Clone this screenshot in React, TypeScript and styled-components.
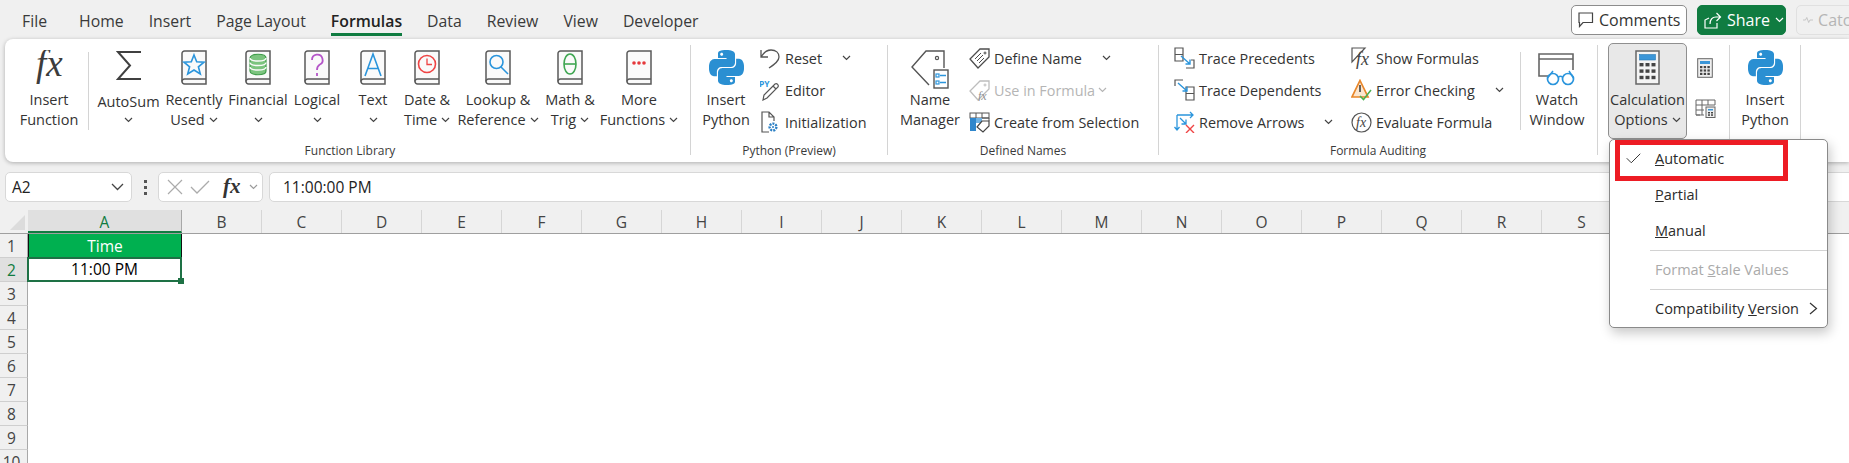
import React from 'react';
import styled, { createGlobalStyle } from 'styled-components';
import { SiPython } from 'react-icons/si';

const GlobalStyle = createGlobalStyle`
    * { box-sizing: border-box; }
    html, body {
        margin: 0;
        height: 463px;
        overflow: hidden;
        background: #fff;
        font-family: "Open Sans", "Noto Sans", sans-serif;
        color: #333;
    }
`;

const Page = styled.div`
    position: relative;
    width: 1849px;
    height: 463px;
    overflow: hidden;
    background: #fff;
`;

const Chrome = styled.div`
    background: #f0f0f0;
    height: 210px;
    display: flex;
    flex-direction: column;
`;

const TabBar = styled.div`
    display: flex;
    justify-content: space-between;
    height: 39px;
    flex-shrink: 0;
`;

const Tabs = styled.div`
    display: flex;
    gap: 25px;
    padding-left: 22px;
`;

const Tab = styled.div<{ $active?: boolean; $extra?: number }>`
    height: 36px;
    padding-top: 11px;
    line-height: 20px;
    font-size: 15.8px;
    white-space: nowrap;
    font-weight: ${p => (p.$active ? 600 : 400)};
    margin-right: ${p => p.$extra || 0}px;
    color: ${p => (p.$active ? '#222' : '#3a3a3a')};
    border-bottom: 3px solid ${p => (p.$active ? '#107c41' : 'transparent')};
`;

const Actions = styled.div`
    width: 278px;
    padding-top: 5px;
    display: flex;
    overflow: hidden;
`;

const ActionButton = styled.div<{ $w: number; $kind: 'plain' | 'share' | 'faded' }>`
    width: ${p => p.$w}px;
    height: 30px;
    flex-shrink: 0;
    display: flex;
    align-items: center;
    border-radius: 5px;
    font-size: 16px;
    white-space: nowrap;
    margin-right: 10px;
    border: 1px solid ${p => (p.$kind === 'plain' ? '#8c8c8c' : p.$kind === 'share' ? '#107c41' : '#e0e0e0')};
    background: ${p => (p.$kind === 'plain' ? '#fff' : p.$kind === 'share' ? '#107c41' : '#f0f0f0')};
    color: ${p => (p.$kind === 'plain' ? '#333' : p.$kind === 'share' ? '#fff' : '#b5b5b5')};
    padding-left: 6px;
    gap: 5px;
`;

const Ribbon = styled.div`
    margin-left: 5px;
    height: 123px;
    flex-shrink: 0;
    background: #fff;
    border-radius: 8px 0 0 8px;
    box-shadow: 0 1px 4px rgba(0, 0, 0, 0.28);
    padding: 6px 0 0 5px;
    display: flex;
    position: relative;
`;

const Group = styled.div<{ $w: number }>`
    width: ${p => p.$w}px;
    height: 110px;
    border-right: 1px solid #d4d4d4;
    display: flex;
    flex-direction: column;
    flex-shrink: 0;
`;

const GroupBody = styled.div<{ $pad?: number }>`
    height: 98px;
    flex-shrink: 0;
    display: flex;
    padding-left: ${p => p.$pad || 0}px;
`;

const GroupLabel = styled.div`
    height: 16px;
    flex-shrink: 0;
    line-height: 16px;
    font-size: 12px;
    text-align: center;
    color: #3a3a3a;
    white-space: nowrap;
`;

const BigButton = styled.div<{ $w: number }>`
    width: ${p => p.$w}px;
    flex-shrink: 0;
    display: flex;
    flex-direction: column;
    align-items: center;
    padding-top: 5px;
`;

const ActiveButton = styled(BigButton)`
    height: 96px;
    margin: -2px 0 0 10px;
    padding-top: 6px;
    background: #e8e8e8;
    border: 1px solid #8f8f8f;
    border-radius: 5px;
`;

const IconSlot = styled.div`
    height: 34px;
    margin-bottom: 6px;
    display: flex;
    justify-content: center;
    align-items: flex-start;
`;

const Line = styled.div<{ $shift?: number }>`
    height: 20px;
    line-height: 20px;
    font-size: 14.5px;
    white-space: nowrap;
    display: flex;
    align-items: center;
    justify-content: center;
    gap: 4px;
    position: relative;
    top: ${p => (p.$shift || 0) - 0.5}px;
`;

const Inner = styled.div`
    width: 1px;
    height: 78px;
    margin-top: 7px;
    background: #d4d4d4;
    flex-shrink: 0;
`;

const Stack = styled.div<{ $w: number }>`
    width: ${p => p.$w}px;
    flex-shrink: 0;
    margin-top: -3px;
    display: flex;
    flex-direction: column;
`;

const Row = styled.div<{ $off?: boolean }>`
    height: 32px;
    display: flex;
    align-items: center;
    white-space: nowrap;
    font-size: 14.4px;
    color: ${p => (p.$off ? '#b5b5b5' : '#333')};
`;

const RowIcon = styled.div`
    width: 25px;
    flex-shrink: 0;
    display: flex;
    align-items: center;
`;

const RowChevron = styled.div<{ $gap: number }>`
    margin-left: ${p => p.$gap}px;
    display: flex;
    align-items: center;
`;

const MiniIcons = styled.div`
    width: 22px;
    margin-left: 7px;
    padding-top: 13px;
    display: flex;
    flex-direction: column;
    align-items: center;
    gap: 21px;
`;

const FormulaBar = styled.div`
    display: flex;
    height: 30px;
    margin-top: 10px;
    padding-left: 5px;
    flex-shrink: 0;
`;

const Field = styled.div<{ $w?: number; $grow?: boolean }>`
    width: ${p => (p.$w ? `${p.$w}px` : 'auto')};
    flex: ${p => (p.$grow ? 1 : 'none')};
    background: #fff;
    border: 1px solid #d8d8d8;
    border-radius: 5px;
    display: flex;
    align-items: center;
    font-size: 15.5px;
    color: #222;
`;

const NameField = styled(Field)`
    justify-content: space-between;
    padding: 0 7px 0 6px;
`;

const FormulaField = styled(Field)`
    margin: 0 -1px 0 6px;
    padding-left: 13px;
    border-radius: 5px 0 0 5px;
`;

const Dots = styled.div`
    width: 26px;
    display: flex;
    flex-direction: column;
    align-items: center;
    justify-content: center;
    gap: 3px;

    i {
        width: 3px;
        height: 3px;
        background: #555;
    }
`;

const FxTools = styled(Field)`
    justify-content: space-between;
    padding: 0 4px 0 8px;
`;

const Sheet = styled.div`
    height: 253px;
    overflow: hidden;
`;

const HeaderRow = styled.div`
    display: flex;
    height: 24px;
    background: #f0f0f0;
    border-bottom: 1px solid #9f9f9f;
`;

const Corner = styled.div`
    width: 28px;
    flex-shrink: 0;
    padding: 5px 0 0 10px;
`;

const Triangle = styled.div`
    width: 0;
    height: 0;
    border-left: 15px solid transparent;
    border-bottom: 15px solid #dcdcdc;
`;

const ColHead = styled.div<{ $w: number; $on?: boolean }>`
    width: ${p => p.$w}px;
    flex-shrink: 0;
    text-align: center;
    font-size: 15.5px;
    line-height: 24px;
    color: ${p => (p.$on ? '#107c41' : '#444')};
    background: ${p => (p.$on ? '#e0e0e0' : 'transparent')};
    border-right: 1px solid ${p => (p.$on ? '#a8a8a8' : '#d6d6d6')};
    border-bottom: ${p => (p.$on ? '2px solid #107c41' : 'none')};
`;

const SheetRow = styled.div`
    display: flex;
    height: 24px;
`;

const RowHead = styled.div<{ $on?: boolean }>`
    width: 28px;
    flex-shrink: 0;
    text-align: center;
    font-size: 15.5px;
    line-height: 24px;
    padding-right: 4px;
    color: ${p => (p.$on ? '#107c41' : '#444')};
    background: ${p => (p.$on ? '#e0e0e0' : '#f0f0f0')};
    border-right: 1px solid #a8a8a8;
    border-bottom: 1px solid #cfcfcf;
`;

const Cell = styled.div`
    width: 154px;
    height: 24px;
    flex-shrink: 0;
    text-align: center;
    font-size: 15.5px;
    line-height: 24px;
`;

const TitleCell = styled(Cell)`
    background: #00b050;
    color: #fff;
    border-left: 1px solid #111;
    border-right: 1px solid #111;
`;

const SelectedCell = styled(Cell)`
    position: relative;
    color: #000;
    line-height: 20px;
    border: 2px solid #1e7145;
    margin: -1px 0 0 -1px;
    width: 155px;
    height: 25px;
    background: #fff;
`;

const FillHandle = styled.div`
    position: absolute;
    right: -4px;
    bottom: -4px;
    width: 6px;
    height: 6px;
    background: #1e7145;
`;

const Menu = styled.div`
    position: absolute;
    left: 1609px;
    top: 139px;
    width: 219px;
    height: 189px;
    background: #fff;
    border: 1px solid #8a8a8a;
    border-radius: 5px;
    box-shadow: 2px 5px 12px rgba(0, 0, 0, 0.22);
    padding-top: 1px;
    font-size: 14.5px;
    color: #2b2b2b;
`;

const MenuItem = styled.div<{ $off?: boolean }>`
    height: 36px;
    display: flex;
    align-items: center;
    padding: 0 0 2px 45px;
    white-space: nowrap;
    position: relative;
    color: ${p => (p.$off ? '#aaaaaa' : '#2b2b2b')};
`;

const MenuCheck = styled.div`
    position: absolute;
    left: 16px;
    top: 12px;
    display: flex;
`;

const MenuArrow = styled.div`
    position: absolute;
    right: 9px;
    top: 11px;
    display: flex;
`;

const MenuLine = styled.div`
    height: 1px;
    margin: 1px 0 1px 40px;
    background: #d2d2d2;
`;

const RedBox = styled.div`
    position: absolute;
    left: 5px;
    top: 0;
    width: 173px;
    height: 41px;
    border: 5px solid #ed1c24;
`;

const serif = '"Liberation Serif", "DejaVu Serif", serif';

const Chevron = ({ color = '#444' }: { color?: string }) => (
    <svg width="9" height="6" viewBox="0 0 9 6"><path d="M1 1 L4.5 4.5 L8 1" fill="none" stroke={color} strokeWidth="1.2" /></svg>
);

const Book = ({ children }: { children: React.ReactNode }) => (
    <svg width="26" height="35" viewBox="0 0 26 35">
        <path d="M3.5 1 H25 V34 H3.5 A2.5 2.5 0 0 1 1 31.5 V3.5 A2.5 2.5 0 0 1 3.5 1 Z" fill="#fafafa" stroke="#5a5a5a" strokeWidth="1.5" />
        <path d="M1 31.5 A2.5 2.5 0 0 1 3.5 29 H25" fill="none" stroke="#5a5a5a" strokeWidth="1.5" />
        {children}
    </svg>
);

const FxBig = () => (
    <svg width="36" height="36" viewBox="0 0 36 36">
        <text x="5" y="26" fontFamily={serif} fontStyle="italic" fontSize="37" fill="#3c3c3c">fx</text>
    </svg>
);

const Sigma = () => (
    <svg width="26" height="31" viewBox="0 0 26 31">
        <path d="M25 2 H2 L14 15.5 L2 29 H25" fill="none" stroke="#404040" strokeWidth="2" />
    </svg>
);

const blue = '#2b95dc';
const line = { fill: 'none', strokeWidth: 1.6 };

const StarIcon = () => (
    <Book><polygon points="13,5 15.7,11.8 23,12.2 17.4,16.8 19.3,24 13,20 6.7,24 8.6,16.8 3,12.2 10.3,11.8" {...line} stroke={blue} /></Book>
);

const CoinsIcon = () => (
    <Book>
        <path d="M5 8 C5 3 21 3 21 8 V21 C21 26 5 26 5 21 Z" fill="#7cc47f" stroke="#3f9c4a" strokeWidth="1.2" />
        <path d="M5 8 C5 12 21 12 21 8 M5 12.5 C5 16.5 21 16.5 21 12.5 M5 17 C5 21 21 21 21 17" fill="none" stroke="#fafafa" strokeWidth="1.4" />
    </Book>
);

const QuestionIcon = () => (
    <Book><path d="M8 10 A5.3 5.3 0 1 1 15.5 14.8 C13.8 16 13 17 13 20 M13 23 V26" {...line} strokeWidth={1.8} stroke="#b455c8" /></Book>
);

const LetterIcon = () => (
    <Book><path d="M5 26 L13 4 L21 26 M8 18.5 H18" {...line} stroke={blue} /></Book>
);

const ClockIcon = () => (
    <Book>
        <circle cx="13" cy="14" r="8.5" {...line} stroke="#ef4444" />
        <path d="M13 8.5 V14.5 H18" {...line} strokeWidth={1.3} stroke="#ef4444" />
    </Book>
);

const LensIcon = () => (
    <Book>
        <circle cx="11.5" cy="12" r="6.5" {...line} stroke={blue} />
        <path d="M16 17 L23 24" {...line} stroke={blue} />
    </Book>
);

const ThetaIcon = () => (
    <Book>
        <ellipse cx="13" cy="14" rx="6" ry="10" {...line} stroke="#3fa652" />
        <path d="M7 14 H19" {...line} stroke="#3fa652" />
    </Book>
);

const MoreIcon = () => (
    <Book>
        <circle cx="8" cy="13" r="1.8" fill="#e5383b" />
        <circle cx="13" cy="13" r="1.8" fill="#e5383b" />
        <circle cx="18" cy="13" r="1.8" fill="#e5383b" />
    </Book>
);

const PyIcon = () => <SiPython size={35} color="#2a8fd2" />;

const Undo = () => (
    <svg width="20" height="21" viewBox="0 0 20 21">
        <path d="M1 2 V9 H8 M1.5 8.5 C4 4 8 2 11 2 C16 2 19 5 19 9 C19 13 15 16 9 20" fill="none" stroke="#555" strokeWidth="1.3" />
    </svg>
);

const PyPencil = () => (
    <svg width="20" height="21" viewBox="0 0 20 21">
        <text x="-1" y="7" fontFamily="Open Sans, sans-serif" fontWeight="700" fontSize="8.5" fill={blue}>PY</text>
        <path d="M3 20 L4 15 L15 4 C17 3 19 5 18 7 L7 18 Z M13 6 L16 9" fill="none" stroke="#555" strokeWidth="1.2" />
    </svg>
);

const DocGear = () => (
    <svg width="20" height="22" viewBox="0 0 20 22">
        <path d="M9 21 H2 V1 H9 L14 6 V10 M9 1 V6 H14" fill="none" stroke="#555" strokeWidth="1.2" />
        <circle cx="13" cy="16" r="3.4" fill="none" stroke="#2b7fc4" strokeWidth="2.4" strokeDasharray="2 1" />
        <circle cx="13" cy="16" r="1" fill="#2b7fc4" />
    </svg>
);

const NameTag = () => (
    <svg width="38" height="40" viewBox="0 0 38 40">
        <path d="M33 18 V1 H15 L1 17 L18 35" fill="none" stroke="#555" strokeWidth="1.4" />
        <circle cx="26" cy="8" r="1.6" fill="none" stroke="#555" strokeWidth="1.2" />
        <rect x="23" y="20" width="14" height="18" fill="#fff" stroke="#555" strokeWidth="1.4" />
        <rect x="25" y="24" width="3" height="3" fill="none" stroke={blue} strokeWidth="1.2" />
        <rect x="25" y="31" width="3" height="3" fill="none" stroke={blue} strokeWidth="1.2" />
        <path d="M29 25.5 H35 M29 32.5 H35" stroke={blue} strokeWidth="1.3" />
    </svg>
);

const SmallTag = ({ off }: { off?: boolean }) => {
    const c = off ? '#bdbdbd' : '#4d4d4d';
    return (
        <svg width="21" height="21" viewBox="0 0 21 21">
            <path d="M11 1 H20 V9 L9 20 L1 11 Z" fill="none" stroke={c} strokeWidth="1.3" />
            <circle cx="16" cy="5" r="1" fill="none" stroke={c} />
            {off
                ? <text x="9" y="20" fontFamily={serif} fontStyle="italic" fontSize="12" fill="#8f8f8f">fx</text>
                : <path d="M6 11 L12 5 M8 13 L14 7 M10 15 L15 10" stroke={c} strokeWidth="1" />}
        </svg>
    );
};

const TableTag = () => (
    <svg width="21" height="21" viewBox="0 0 21 21">
        <rect x="1" y="1" width="19" height="5" fill="none" stroke="#555" />
        <path d="M7 1 V6 M13 1 V6" stroke="#555" />
        <rect x="1" y="6" width="6" height="13" fill="#2f86cc" />
        <rect x="7" y="6" width="6" height="5" fill="#6fb1e3" />
        <path d="M13 6 H20 V9" fill="none" stroke="#555" />
        <path d="M13 9 H20 V14 L14 20 L8 15 Z" fill="#fff" stroke="#444" strokeWidth="1.2" />
    </svg>
);

const TracePre = () => (
    <svg width="21" height="22" viewBox="0 0 21 22">
        <path d="M1 1 H9 V14 H1 Z M1 7.5 H9" fill="none" stroke="#555" strokeWidth="1.2" />
        <path d="M12 21 H20 V13 H17" fill="none" stroke="#555" strokeWidth="1.2" />
        <path d="M7 9 L16 17 M16 12.5 V17 H11.5" fill="none" stroke={blue} strokeWidth="1.4" />
    </svg>
);

const TraceDep = () => (
    <svg width="21" height="22" viewBox="0 0 21 22">
        <path d="M1 7 V1 H9 M1 1 V7" fill="none" stroke="#555" strokeWidth="1.2" />
        <path d="M12 8 H20 V21 H12 Z M12 14.5 H20" fill="none" stroke="#555" strokeWidth="1.2" />
        <path d="M4 4 L13 12 M13 7.5 V12 H8.5" fill="none" stroke={blue} strokeWidth="1.4" />
    </svg>
);

const RemoveArrows = () => (
    <svg width="22" height="22" viewBox="0 0 22 22">
        <path d="M3 4 H19 M16 1 L19 4 L16 7 M3 4 V19 M0.5 16 L3 19 L5.5 16 M6 7 L12 13 M12 8.5 V13 H7.5" fill="none" stroke={blue} strokeWidth="1.3" />
        <path d="M12 14 L20 22 M20 14 L12 22" stroke="#ef4444" strokeWidth="1.4" />
    </svg>
);

const ShowFx = () => (
    <svg width="21" height="22" viewBox="0 0 21 22">
        <path d="M1 1 H14 L1 15 Z" fill="none" stroke="#555" strokeWidth="1.2" />
        <text x="5" y="18" fontFamily={serif} fontStyle="italic" fontSize="18" fill="#444">fx</text>
    </svg>
);

const ErrorCheck = () => (
    <svg width="21" height="22" viewBox="0 0 21 22">
        <path d="M9 1.5 L17 18 H1 Z" fill="#fbe6cf" stroke="#e8862a" strokeWidth="1.7" />
        <path d="M9 6 V13" stroke="#333" strokeWidth="1.5" />
        <path d="M9 17 L12.5 20.5 L20 11" fill="none" stroke="#4caf50" strokeWidth="1.5" />
    </svg>
);

const EvalFx = () => (
    <svg width="21" height="21" viewBox="0 0 21 21">
        <circle cx="10.5" cy="10.5" r="9.5" fill="none" stroke="#555" strokeWidth="1.2" />
        <text x="5" y="15" fontFamily={serif} fontStyle="italic" fontSize="14" fill="#444">fx</text>
    </svg>
);

const WatchIcon = () => (
    <svg width="39" height="37" viewBox="0 0 39 37">
        <path d="M10 26 H1 V4 H35 V20 M1 9 H35" fill="none" stroke="#666" strokeWidth="1.6" />
        <circle cx="15" cy="29" r="5.5" fill="#fff" stroke={blue} strokeWidth="1.7" />
        <circle cx="30" cy="29" r="5.5" fill="#fff" stroke={blue} strokeWidth="1.7" />
        <path d="M20.5 27 C22 26 23 26 24.5 27 M9.5 28 L15 21 M35.5 28 L31 21" fill="none" stroke={blue} strokeWidth="1.5" />
    </svg>
);

const keys = (cols: number, rows: number, x: number, y: number, w: number, h: number, gx: number, gy: number) => {
    const out: React.ReactNode[] = [];
    for (let r = 0; r < rows; r++) {
        for (let c = 0; c < cols; c++) {
            out.push(<rect key={`${r}-${c}`} x={x + c * gx} y={y + r * gy} width={w} height={h} fill="#444" />);
        }
    }
    return out;
};

const Calculator = () => (
    <svg width="25" height="35" viewBox="0 0 25 35">
        <rect x="1" y="1" width="23" height="33" fill="#f4f4f4" stroke="#666" strokeWidth="1.5" />
        <rect x="4.5" y="4.5" width="16" height="5.5" fill="#3b96d8" stroke="#2a7ab5" strokeWidth="0.6" />
        {keys(3, 3, 4.5, 13, 4, 3.4, 6, 6.4)}
    </svg>
);

const MiniCalc = () => (
    <svg width="16" height="20" viewBox="0 0 16 20">
        <rect x="0.7" y="0.7" width="14.6" height="18.6" fill="#efefef" stroke="#666" />
        <rect x="3" y="3" width="10" height="3" fill="#3b96d8" />
        {keys(3, 3, 3, 8, 2.4, 2.2, 3.7, 3.4)}
    </svg>
);

const SheetCalc = () => (
    <svg width="21" height="19" viewBox="0 0 21 19">
        <path d="M1 1 H20 V6 H1 Z M1 6 V16 H9 M7 1 V16 M13 1 V6 M1 11 H9 M1 16 L5 16" fill="none" stroke="#666" strokeWidth="1" />
        <rect x="11" y="8" width="9" height="10.5" fill="#efefef" stroke="#666" />
        <rect x="13" y="10" width="5" height="1.5" fill="#3b96d8" />
        {keys(2, 2, 13, 13, 2, 1.5, 3, 2.3)}
    </svg>
);

const Bubble = () => (
    <svg width="16" height="16" viewBox="0 0 16 16">
        <path d="M1 1 H14.5 V10.5 H5 L1.5 14.5 V10.5 H1 Z" fill="none" stroke="#444" strokeWidth="1.2" />
    </svg>
);

const ShareIcon = () => (
    <svg width="18" height="18" viewBox="0 0 18 18">
        <path d="M5 7 L1 9 V17 H13 V12" fill="none" stroke="#fff" strokeWidth="1.2" />
        <path d="M6 13 C6 8 9 6 12 6 H16 M12.5 2 L16.5 6 L12.5 10" fill="none" stroke="#fff" strokeWidth="1.2" />
    </svg>
);

const Spark = () => (
    <svg width="16" height="12" viewBox="0 0 16 12">
        <path d="M0 6 H4 L6 2 L9 10 L11 6 H16" fill="none" stroke="#b5b5b5" strokeWidth="1.1" />
    </svg>
);

const CrossGlyph = () => (
    <svg width="16" height="16" viewBox="0 0 16 16"><path d="M1 1 L15 15 M15 1 L1 15" stroke="#ababab" strokeWidth="1.2" /></svg>
);

const TickGlyph = ({ color = '#ababab', w = 20 }: { color?: string; w?: number }) => (
    <svg width={w} height={w * 0.7} viewBox="0 0 20 14"><path d="M1 7 L7 13 L19 1" fill="none" stroke={color} strokeWidth="1.3" /></svg>
);

const FxSmall = () => (
    <svg width="24" height="24" viewBox="0 0 24 24">
        <text x="5" y="18" fontFamily={serif} fontStyle="italic" fontWeight="700" fontSize="21" fill="#333">fx</text>
    </svg>
);

const DownChevron = () => (
    <svg width="13" height="8" viewBox="0 0 13 8"><path d="M1 1 L6.5 6.5 L12 1" fill="none" stroke="#444" strokeWidth="1.3" /></svg>
);

const library = [
    { w: 73, icon: <Sigma />, top: 'AutoSum', bottom: '', shift: 2 },
    { w: 58, icon: <StarIcon />, top: 'Recently', bottom: 'Used' },
    { w: 70, icon: <CoinsIcon />, top: 'Financial', bottom: '' },
    { w: 48, icon: <QuestionIcon />, top: 'Logical', bottom: '' },
    { w: 64, icon: <LetterIcon />, top: 'Text', bottom: '' },
    { w: 44, icon: <ClockIcon />, top: 'Date &', bottom: 'Time' },
    { w: 98, icon: <LensIcon />, top: 'Lookup &', bottom: 'Reference' },
    { w: 46, icon: <ThetaIcon />, top: 'Math &', bottom: 'Trig' },
    { w: 92, icon: <MoreIcon />, top: 'More', bottom: 'Functions' },
];

const columns = 'BCDEFGHIJKLMNOPQRSTUV'.split('');
const rows = [3, 4, 5, 6, 7, 8, 9, 10];

const App: React.FC = () => {
    return (
        <Page>
            <GlobalStyle />
            <Chrome>
                <TabBar>
                    <Tabs>
                        <Tab $extra={7}>File</Tab>
                        <Tab>Home</Tab>
                        <Tab>Insert</Tab>
                        <Tab>Page Layout</Tab>
                        <Tab $active>Formulas</Tab>
                        <Tab>Data</Tab>
                        <Tab>Review</Tab>
                        <Tab>View</Tab>
                        <Tab>Developer</Tab>
                    </Tabs>
                    <Actions>
                        <ActionButton $w={116} $kind="plain"><Bubble />Comments</ActionButton>
                        <ActionButton $w={89} $kind="share"><ShareIcon />Share<Chevron color="#fff" /></ActionButton>
                        <ActionButton $w={90} $kind="faded"><Spark />Catch-up</ActionButton>
                    </Actions>
                </TabBar>
                <Ribbon>
                    <Group $w={681}>
                        <GroupBody $pad={4}>
                            <BigButton $w={70}>
                                <IconSlot><FxBig /></IconSlot>
                                <Line>Insert</Line>
                                <Line>Function</Line>
                            </BigButton>
                            <BigButton $w={4} />
                            <Inner />
                            <BigButton $w={3} />
                            {library.map(item => (
                                <BigButton $w={item.w} key={item.top}>
                                    <IconSlot>{item.icon}</IconSlot>
                                    <Line $shift={item.shift}>{item.top}</Line>
                                    <Line>{item.bottom}<Chevron /></Line>
                                </BigButton>
                            ))}
                        </GroupBody>
                        <GroupLabel>Function Library</GroupLabel>
                    </Group>
                    <Group $w={197}>
                        <GroupBody $pad={1}>
                            <BigButton $w={68}>
                                <IconSlot><PyIcon /></IconSlot>
                                <Line>Insert</Line>
                                <Line>Python</Line>
                            </BigButton>
                            <Stack $w={110}>
                                <Row><RowIcon><Undo /></RowIcon>Reset<RowChevron $gap={20}><Chevron /></RowChevron></Row>
                                <Row><RowIcon><PyPencil /></RowIcon>Editor</Row>
                                <Row><RowIcon><DocGear /></RowIcon>Initialization</Row>
                            </Stack>
                        </GroupBody>
                        <GroupLabel>Python (Preview)</GroupLabel>
                    </Group>
                    <Group $w={271}>
                        <GroupBody $pad={3}>
                            <BigButton $w={78}>
                                <IconSlot><NameTag /></IconSlot>
                                <Line>Name</Line>
                                <Line>Manager</Line>
                            </BigButton>
                            <Stack $w={180}>
                                <Row><RowIcon><SmallTag /></RowIcon>Define Name<RowChevron $gap={20}><Chevron /></RowChevron></Row>
                                <Row $off><RowIcon><SmallTag off /></RowIcon>Use in Formula<RowChevron $gap={3}><Chevron color="#b5b5b5" /></RowChevron></Row>
                                <Row><RowIcon><TableTag /></RowIcon>Create from Selection</Row>
                            </Stack>
                        </GroupBody>
                        <GroupLabel>Defined Names</GroupLabel>
                    </Group>
                    <Group $w={439}>
                        <GroupBody $pad={15}>
                            <Stack $w={177}>
                                <Row><RowIcon><TracePre /></RowIcon>Trace Precedents</Row>
                                <Row><RowIcon><TraceDep /></RowIcon>Trace Dependents</Row>
                                <Row><RowIcon><RemoveArrows /></RowIcon>Remove Arrows<RowChevron $gap={20}><Chevron /></RowChevron></Row>
                            </Stack>
                            <Stack $w={169}>
                                <Row><RowIcon><ShowFx /></RowIcon>Show Formulas</Row>
                                <Row><RowIcon><ErrorCheck /></RowIcon>Error Checking<RowChevron $gap={20}><Chevron /></RowChevron></Row>
                                <Row><RowIcon><EvalFx /></RowIcon>Evaluate Formula</Row>
                            </Stack>
                            <Inner />
                            <BigButton $w={72}>
                                <IconSlot><WatchIcon /></IconSlot>
                                <Line>Watch</Line>
                                <Line>Window</Line>
                            </BigButton>
                        </GroupBody>
                        <GroupLabel>Formula Auditing</GroupLabel>
                    </Group>
                    <Group $w={132}>
                        <GroupBody>
                            <ActiveButton $w={79}>
                                <IconSlot><Calculator /></IconSlot>
                                <Line>Calculation</Line>
                                <Line>Options<Chevron /></Line>
                            </ActiveButton>
                            <MiniIcons>
                                <MiniCalc />
                                <SheetCalc />
                            </MiniIcons>
                        </GroupBody>
                    </Group>
                    <Group $w={71}>
                        <GroupBody>
                            <BigButton $w={70}>
                                <IconSlot><PyIcon /></IconSlot>
                                <Line>Insert</Line>
                                <Line>Python</Line>
                            </BigButton>
                        </GroupBody>
                    </Group>
                </Ribbon>
                <FormulaBar>
                    <NameField $w={127}>A2<DownChevron /></NameField>
                    <Dots><i /><i /><i /></Dots>
                    <FxTools $w={105}>
                        <CrossGlyph />
                        <TickGlyph />
                        <FxSmall />
                        <Chevron color="#9a9a9a" />
                    </FxTools>
                    <FormulaField $grow>11:00:00 PM</FormulaField>
                </FormulaBar>
            </Chrome>
            <Sheet>
                <HeaderRow>
                    <Corner><Triangle /></Corner>
                    <ColHead $w={154} $on>A</ColHead>
                    {columns.map(c => <ColHead $w={80} key={c}>{c}</ColHead>)}
                </HeaderRow>
                <SheetRow>
                    <RowHead>1</RowHead>
                    <TitleCell>Time</TitleCell>
                </SheetRow>
                <SheetRow>
                    <RowHead $on>2</RowHead>
                    <SelectedCell>11:00 PM<FillHandle /></SelectedCell>
                </SheetRow>
                {rows.map(n => (
                    <SheetRow key={n}><RowHead>{n}</RowHead></SheetRow>
                ))}
            </Sheet>
            <Menu>
                <MenuItem>
                    <MenuCheck><TickGlyph color="#333" w={15} /></MenuCheck>
                    <span><u>A</u>utomatic</span>
                </MenuItem>
                <MenuItem><span><u>P</u>artial</span></MenuItem>
                <MenuItem><span><u>M</u>anual</span></MenuItem>
                <MenuLine />
                <MenuItem $off><span>Format <u>S</u>tale Values</span></MenuItem>
                <MenuLine />
                <MenuItem>
                    <span>Compatibility <u>V</u>ersion</span>
                    <MenuArrow>
                        <svg width="9" height="13" viewBox="0 0 9 13"><path d="M1 1 L7.5 6.5 L1 12" fill="none" stroke="#333" strokeWidth="1.2" /></svg>
                    </MenuArrow>
                </MenuItem>
                <RedBox />
            </Menu>
        </Page>
    );
};

export default App;
